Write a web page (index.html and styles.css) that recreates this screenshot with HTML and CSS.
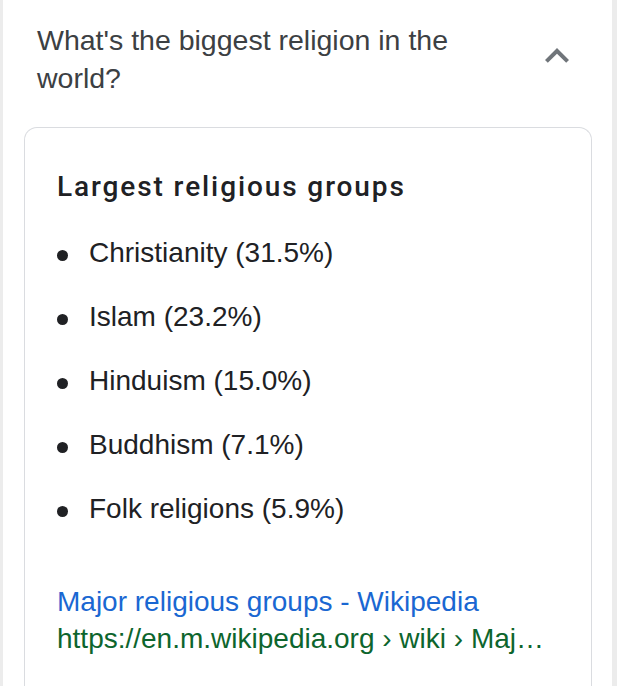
FILE: index.html
```html
<!DOCTYPE html>
<html>
  <head>
    <meta charset="UTF-8" />
    <title>Religion</title>
    <link rel="stylesheet" href="styles.css">
  </head>
  <body>
    <div class="page">
      <div class="question">
        <div class="question-text">What's the biggest religion in the world?</div>
        <svg class="chevron" viewBox="0 0 24 24" width="48" height="48">
          <path d="M12 8l-6 6 1.41 1.41L12 10.83l4.59 4.58L18 14z" fill="#70757a"/>
        </svg>
      </div>
      <div class="card">
        <div class="card-title">Largest religious groups</div>
        <ul class="groups">
          <li><span class="dot"></span>Christianity (31.5%)</li>
          <li><span class="dot"></span>Islam (23.2%)</li>
          <li><span class="dot"></span>Hinduism (15.0%)</li>
          <li><span class="dot"></span>Buddhism (7.1%)</li>
          <li><span class="dot"></span>Folk religions (5.9%)</li>
        </ul>
        <a class="source-title" href="#">Major religious groups - Wikipedia</a>
        <div class="source-url">https://en.m.wikipedia.org › wiki › Maj…</div>
      </div>
    </div>
  </body>
</html>
```

FILE: styles.css
```css
*{margin: 0;padding: 0}
body{
  background: #fff;
  font-family: "Liberation Sans", Arial, sans-serif;
}
.page{
  border-left: 3px solid #ececec;
  border-right: 5px solid #ececec;
  min-height: 686px;
  box-sizing: border-box;
}
.question{
  display: flex;
  align-items: flex-start;
  justify-content: space-between;
  padding: 21px 31px 30px 34px;
}
.question-text{
  font-size: 28.5px;
  line-height: 38px;
  color: #3c4043;
  width: 440px;
}
.chevron{
  margin-top: 11px;
  flex: none;
}
.card{
  margin-left: 21px;
  width: 568px;
  box-sizing: border-box;
  border: 1px solid #dadce0;
  border-bottom: none;
  border-radius: 13px 13px 0 0;
  padding: 41px 20px 30px 32px;
  min-height: 560px;
}
.card-title{
  font-family: Roboto, "Liberation Sans", sans-serif;
  font-weight: 500;
  font-size: 28px;
  line-height: 36px;
  letter-spacing: 1.9px;
  color: #202124;
}
.groups{
  list-style: none;
  margin-top: 16px;
}
.groups li{
  display: flex;
  align-items: center;
  font-size: 28px;
  line-height: 64px;
  color: #202124;
}
.dot{
  width: 11px;
  height: 11px;
  border-radius: 50%;
  background: #202124;
  margin: 5px 21px 0 0;
  flex: none;
}
.source-title{
  display: block;
  margin-top: 43px;
  font-size: 28px;
  line-height: 36px;
  color: #1a67d2;
  text-decoration: none;
}
.source-url{
  font-size: 28px;
  line-height: 37px;
  color: #0d652d;
  white-space: nowrap;
}
```
